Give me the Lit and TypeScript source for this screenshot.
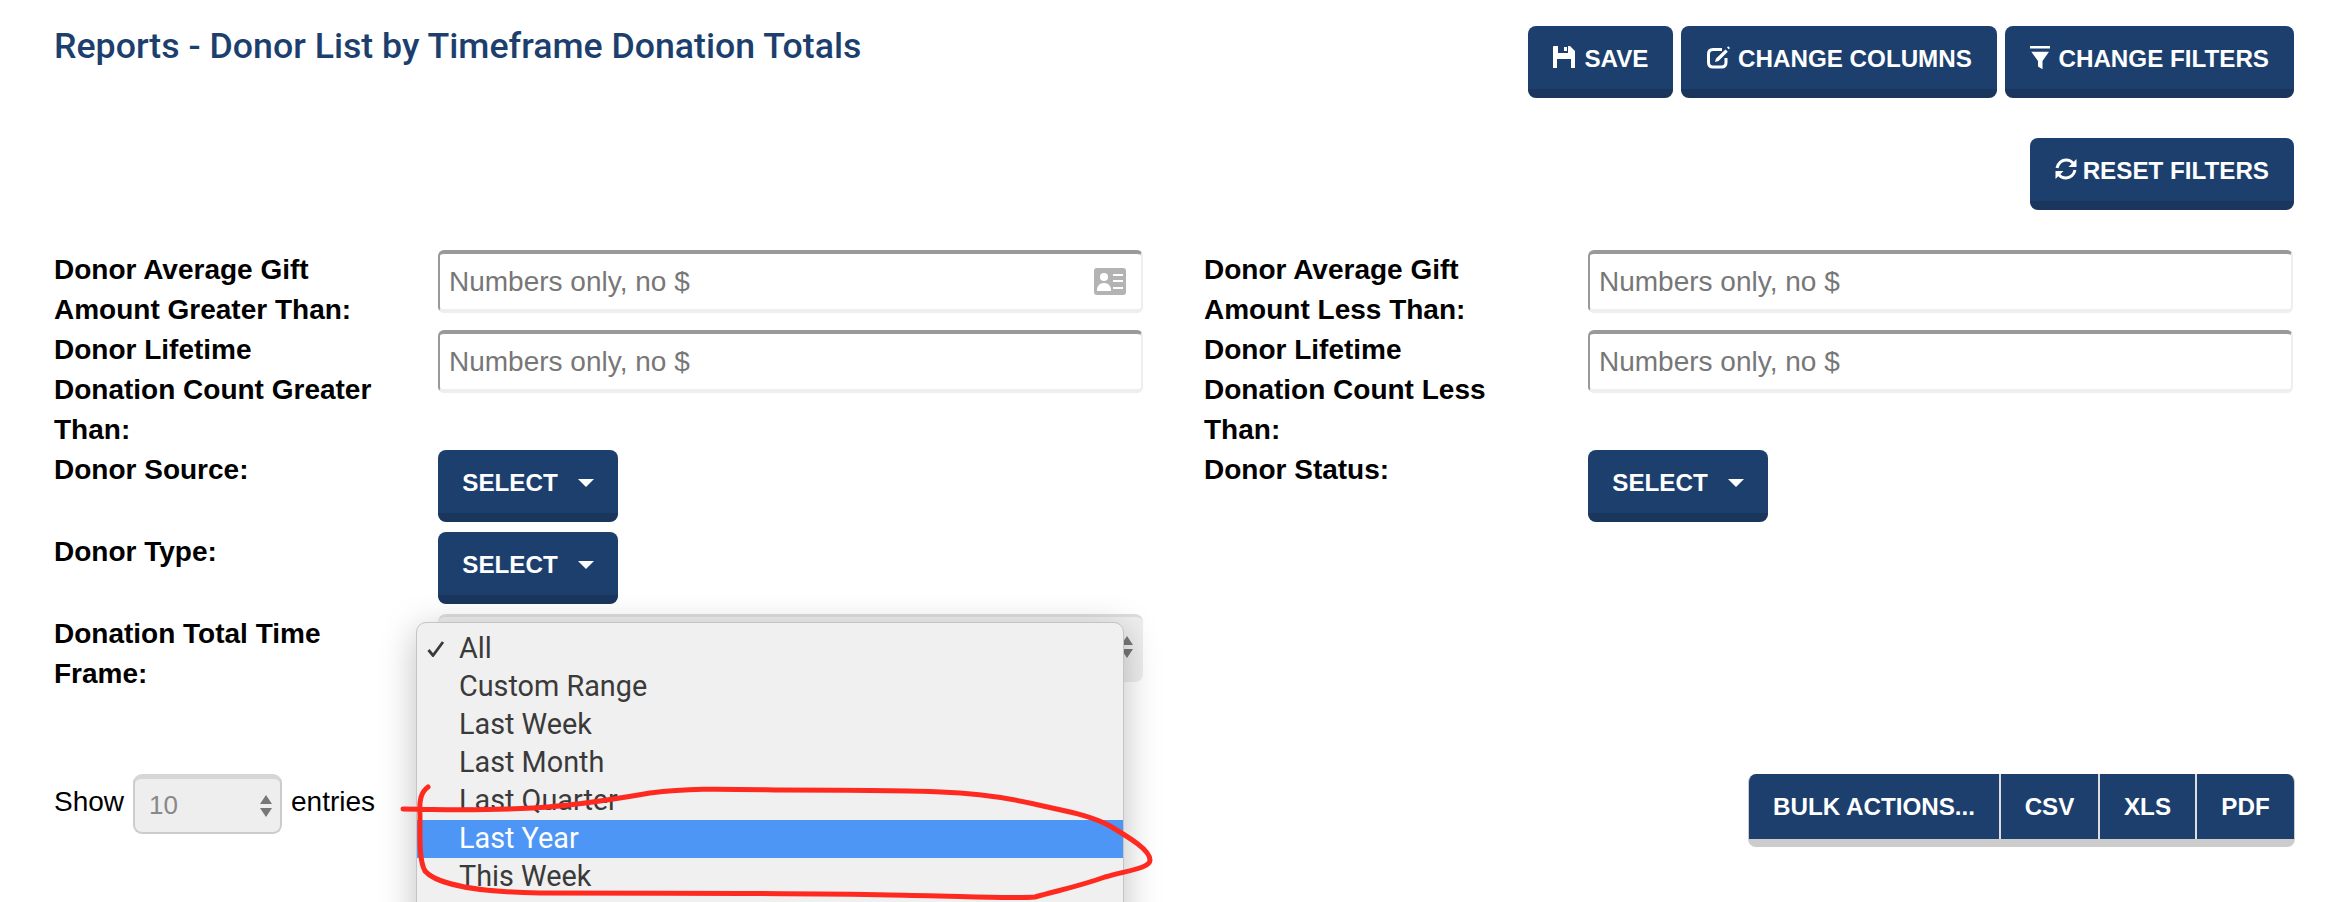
import { LitElement, html, css, svg } from "lit";
import { customElement } from "lit/decorators.js";

const saveIcon = svg`<path fill-rule="evenodd" d="M1 0H5V7H15V0H17L22 5V22H18V13H4V22H0V1Q0 0 1 0ZM11 1H14V5H11Z"/>`;
const editIcon = svg`<path fill="none" stroke="currentColor" stroke-width="3" d="M15 3.500H6Q1.500 3.500 1.500 8V16.500Q1.500 21 6 21H14.500Q19 21 19 16.500V12"/><path d="M18.500 3.500L20.800 5.800L11.500 15L8 16L9 12.500ZM20 1.500L21.200 0.300L23 2.100L21.800 3.300Z"/>`;
const filterIcon = svg`<path d="M0 0H20V2.400H0ZM1.300 5.700H19L12.500 15V23.300L8 20.500V15Z"/>`;
const refreshIcon = svg`<path fill="none" stroke="currentColor" stroke-width="3" d="M2 10C3 5 7 2 11 2C14.500 2 17 3.500 18.500 6M20 12C19 17 15 20 11 20C7.500 20 5 18.500 3.500 16"/><path d="M21.500 1V9H13.500ZM0.500 21V13H8.500Z"/>`;

function btn(icon: unknown, label: string, narrow = false) {
  return html`<button class="btn">
    <svg class="ico ${narrow ? "narrow" : ""}" viewBox="0 0 ${narrow ? 20 : 23} 23" fill="currentColor">${icon}</svg>
    <span>${label}</span>
  </button>`;
}

const selectBtn = () =>
  html`<button class="btn pick"><span>SELECT</span><i class="caret"></i></button>`;

const arrows = html`<span class="arrows"><i class="up"></i><i class="down"></i></span>`;

const OPTIONS = ["All", "Custom Range", "Last Week", "Last Month", "Last Quarter", "Last Year", "This Week"];

@customElement("app-root")
export class AppRoot extends LitElement {
  static styles = css`
    :host {
      display: block;
      position: relative;
      width: 2332px;
      height: 902px;
      overflow: hidden;
      background: #fff;
      color: #000;
      font-family: "Liberation Sans", Arial, sans-serif;
    }
    .page { padding: 26px 38px 0 54px; }
    .head { display: flex; justify-content: space-between; align-items: flex-start; }
    h1 {
      margin: 0;
      font: 500 35.7px/40px Roboto, sans-serif;
      color: #1c3f6e;
    }
    .actions { display: flex; gap: 8px; }
    .actions .btn:nth-child(2) { width: 316px; padding: 2px 0 0; }
    .btn {
      display: inline-flex;
      align-items: center;
      justify-content: center;
      gap: 8px;
      height: 72px;
      padding: 2px 25px 0;
      border: 0;
      border-bottom: 9px solid #1a365d;
      border-radius: 8px;
      box-sizing: border-box;
      background: #1c3f6e;
      color: #fff;
      font: 700 24.2px "Liberation Sans", Arial, sans-serif;
      white-space: nowrap;
    }
    .ico { width: 23px; height: 23px; margin-bottom: 2px; overflow: visible; }
    .ico.narrow { width: 20px; }
    .reset { display: flex; justify-content: flex-end; margin-top: 40px; }
    .form {
      display: grid;
      grid-template-columns: 384px 705px 61px 384px 705px;
      grid-template-rows: 80px 120px 82px 82px 160px;
      margin-top: 40px;
    }
    .lbl { font-weight: 700; font-size: 28px; line-height: 40px; width: 322px; }
    .lbl.r { grid-column: 4; }
    .ctl { position: relative; }
    .ctl.r { grid-column: 5; }
    .wide { grid-column: 2 / span 4; }
    .input {
      display: flex;
      align-items: center;
      justify-content: space-between;
      height: 63px;
      box-sizing: border-box;
      padding: 0 15px 0 9px;
      border: 2px solid #eee;
      border-top: 4px solid #999;
      border-bottom: 4px solid #eee;
      border-left-color: #999;
      border-radius: 6px;
      color: #777;
      font-size: 28px;
    }
    .card { width: 32px; height: 27px; }
    .pick { width: 180px; padding: 2px 0 0; gap: 20px; }
    .caret {
      width: 0;
      height: 0;
      border: 8px solid transparent;
      border-top-color: #fff;
      border-bottom: 0;
    }
    .native {
      height: 68px;
      box-sizing: border-box;
      background: #eee;
      border-radius: 8px;
      border-top: 3px solid #ddd;
      display: flex;
      justify-content: flex-end;
      padding: 19px 10px 0 0;
    }
    .arrows { display: flex; flex-direction: column; gap: 4px; align-items: center; }
    .arrows i { width: 0; height: 0; border: 6px solid transparent; }
    .arrows .up { border-bottom: 9px solid #777; border-top: 0; }
    .arrows .down { border-top: 9px solid #777; border-bottom: 0; }
    .menu {
      position: absolute;
      left: -22px;
      top: 8px;
      width: 708px;
      height: 320px;
      box-sizing: border-box;
      padding-top: 7px;
      background: #f0f0f0;
      border: 1px solid #c4c4c4;
      border-radius: 10px;
      box-shadow: 0 8px 36px rgba(0, 0, 0, 0.25);
      font: 400 28.8px/36px Roboto, sans-serif;
      color: #3a3a3a;
    }
    .opt { position: relative; height: 38px; padding-left: 42px; }
    .opt.sel { background: #4e96f5; color: #fff; }
    .tick { position: absolute; left: 10px; top: 11px; width: 18px; height: 16px; }
    .bottom { display: flex; justify-content: space-between; align-items: flex-start; }
    .len { display: flex; align-items: center; gap: 9px; height: 60px; font-size: 28px; }
    .len > span { padding-bottom: 4px; }
    .len-sel {
      display: flex;
      align-items: center;
      justify-content: space-between;
      width: 149px;
      height: 60px;
      box-sizing: border-box;
      padding: 0 8px 0 14px;
      background: #eee;
      border: 2px solid #ccc;
      border-top: 5px solid #d6d6d6;
      border-radius: 9px;
      color: #888;
      font-size: 26px;
    }
    .group {
      display: flex;
      height: 73px;
      box-sizing: border-box;
      margin-right: -1px;
      border: 1px solid #ccc;
      border-top: 0;
      border-bottom: 8px solid #ccc;
      border-radius: 8px;
      overflow: hidden;
    }
    .group span {
      display: flex;
      align-items: center;
      justify-content: center;
      background: #1c3f6e;
      color: #fff;
      font-weight: 700;
      font-size: 24.2px;
    }
    .group span + span { border-left: 2px solid #ddd; }
    .w-bulk { width: 250px; }
    .w-csv, .w-pdf { width: 97px; }
    .w-xls { width: 95px; }
    .ink { position: absolute; left: 0; top: 0; width: 2332px; height: 902px; pointer-events: none; }
  `;

  render() {
    return html`
      <div class="page">
        <div class="head">
          <h1>Reports - Donor List by Timeframe Donation Totals</h1>
          <div class="actions">
            ${btn(saveIcon, "SAVE")}
            ${btn(editIcon, "CHANGE COLUMNS")}
            ${btn(filterIcon, "CHANGE FILTERS", true)}
          </div>
        </div>
        <div class="reset">${btn(refreshIcon, "RESET FILTERS", true)}</div>

        <div class="form">
          <div class="lbl">Donor Average Gift Amount Greater Than:</div>
          <div class="ctl">
            <div class="input">
              <span>Numbers only, no $</span>
              <svg class="card" viewBox="0 0 32 27">
                <rect width="32" height="27" rx="3" fill="#b3b3b3" />
                <circle cx="10" cy="9" r="4" fill="#fff" />
                <path d="M3 23Q3 15 10 15T17 23Z" fill="#fff" />
                <path d="M19 7H29M19 13H29M19 20H29" stroke="#fff" stroke-width="2" />
              </svg>
            </div>
          </div>
          <div class="lbl r">Donor Average Gift Amount Less Than:</div>
          <div class="ctl r"><div class="input"><span>Numbers only, no $</span></div></div>

          <div class="lbl">Donor Lifetime Donation Count Greater Than:</div>
          <div class="ctl"><div class="input"><span>Numbers only, no $</span></div></div>
          <div class="lbl r">Donor Lifetime Donation Count Less Than:</div>
          <div class="ctl r"><div class="input"><span>Numbers only, no $</span></div></div>

          <div class="lbl">Donor Source:</div>
          <div class="ctl">${selectBtn()}</div>
          <div class="lbl r">Donor Status:</div>
          <div class="ctl r">${selectBtn()}</div>

          <div class="lbl">Donor Type:</div>
          <div class="ctl wide">${selectBtn()}</div>

          <div class="lbl">Donation Total Time Frame:</div>
          <div class="ctl">
            <div class="native">${arrows}</div>
            <div class="menu">
              ${OPTIONS.map(
                (o, i) => html`<div class="opt ${i === 5 ? "sel" : ""}">
                  ${i === 0
                    ? html`<svg class="tick" viewBox="0 0 18 16"><path d="M1.500 9L6 14.500L16 1" fill="none" stroke="#3a3a3a" stroke-width="2.800" /></svg>`
                    : ""}${o}
                </div>`
              )}
            </div>
          </div>
        </div>

        <div class="bottom">
          <div class="len">
            <span>Show</span>
            <div class="len-sel"><span>10</span>${arrows}</div>
            <span>entries</span>
          </div>
          <div class="group">
            <span class="w-bulk">BULK ACTIONS...</span>
            <span class="w-csv">CSV</span>
            <span class="w-xls">XLS</span>
            <span class="w-pdf">PDF</span>
          </div>
        </div>
      </div>
      <svg class="ink" viewBox="0 0 2332 902">
        <path
          d="M428 787C421 792 419 800 420 815C420 840 419 860 425 871C437 885 480 892 540 893C650 893 800 893 890 895C960 896 1010 899 1035 897C1060 890 1080 886 1105 877C1130 870 1150 868 1150 860C1150 850 1130 838 1110 826C1090 815 1065 811 1043 806C1010 798 975 793 941 792C900 790 860 790 780 790C720 789 690 788 650 793C610 800 570 806 533 808C480 811 440 810 403 809"
          fill="none"
          stroke="#ff2a1f"
          stroke-width="5"
          stroke-linecap="round"
        />
      </svg>
    `;
  }
}
